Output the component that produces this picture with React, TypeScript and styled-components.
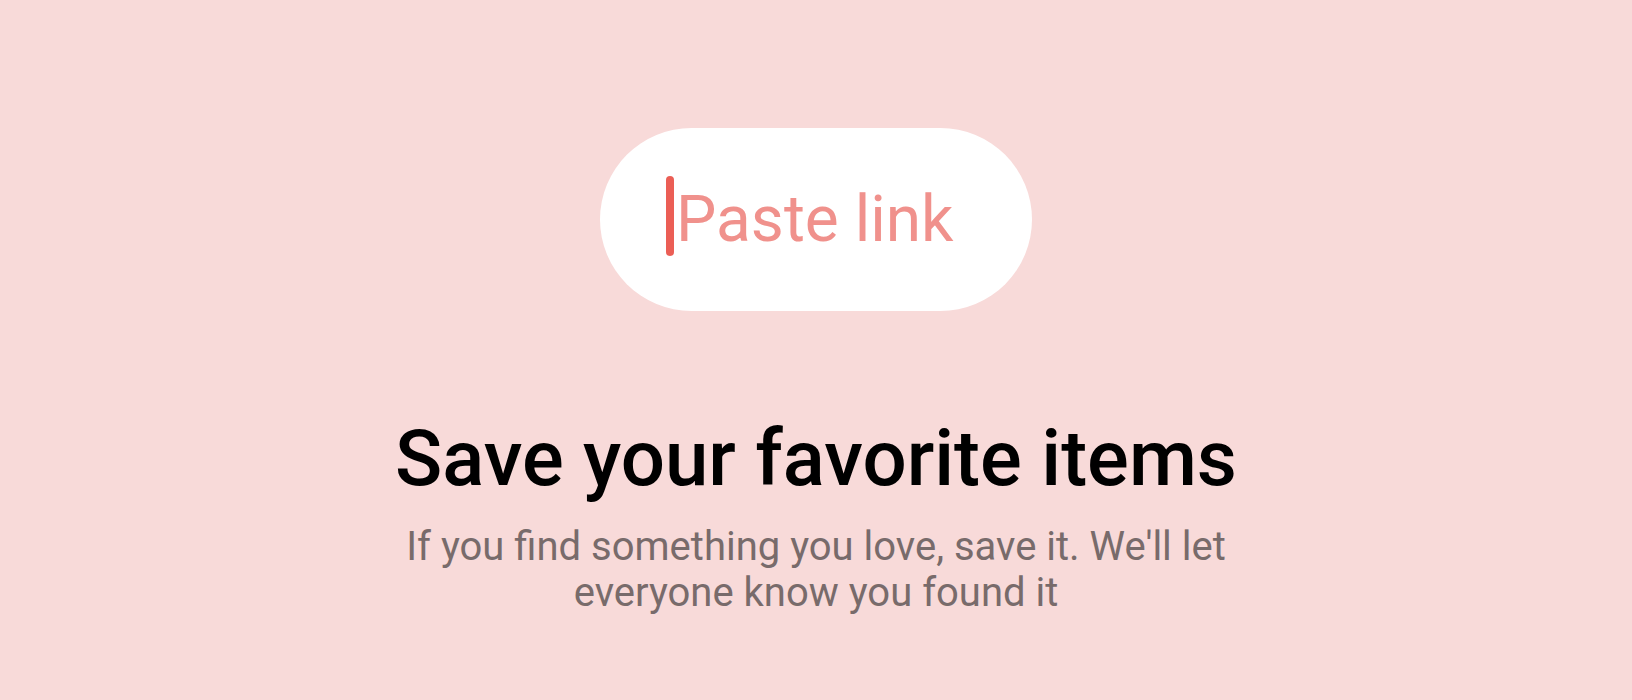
import React from "react";
import styled, { createGlobalStyle } from "styled-components";

const Global = createGlobalStyle`
  html, body { margin: 0; padding: 0; background: #F8DAD9; }
  body { font-family: Roboto, "Liberation Sans", sans-serif; }
`;

const Page = styled.main`
  width: 1632px;
  height: 700px;
  display: flex;
  flex-direction: column;
  align-items: center;
  padding-top: 128px;
  box-sizing: border-box;
`;

const Pill = styled.div`
  width: 432px;
  height: 183px;
  box-sizing: border-box;
  border-radius: 92px;
  background: #ffffff;
  display: flex;
  align-items: center;
  padding-left: 66px;
  gap: 2px;
`;

const Caret = styled.span`
  width: 8px;
  height: 80px;
  border-radius: 4px;
  background: #EB5E55;
  margin-top: -7px;
`;

const Placeholder = styled.span`
  font-size: 64px;
  line-height: 1;
  color: #F0918C;
  font-weight: 400;
`;

const Heading = styled.h1`
  margin: 100px 0 0;
  font-size: 78px;
  line-height: 96px;
  font-weight: 500;
  color: #000000;
`;

const Sub = styled.p`
  margin: 17px 0 0;
  width: 860px;
  text-align: center;
  font-size: 40px;
  line-height: 46px;
  color: #786B6B;
  font-weight: 400;
`;

export default function App() {
  return (
    <>
      <Global />
      <Page>
        <Pill>
          <Caret />
          <Placeholder>Paste link</Placeholder>
        </Pill>
        <Heading>Save your favorite items</Heading>
        <Sub>If you find something you love, save it. We'll let everyone know you found it</Sub>
      </Page>
    </>
  );
}
